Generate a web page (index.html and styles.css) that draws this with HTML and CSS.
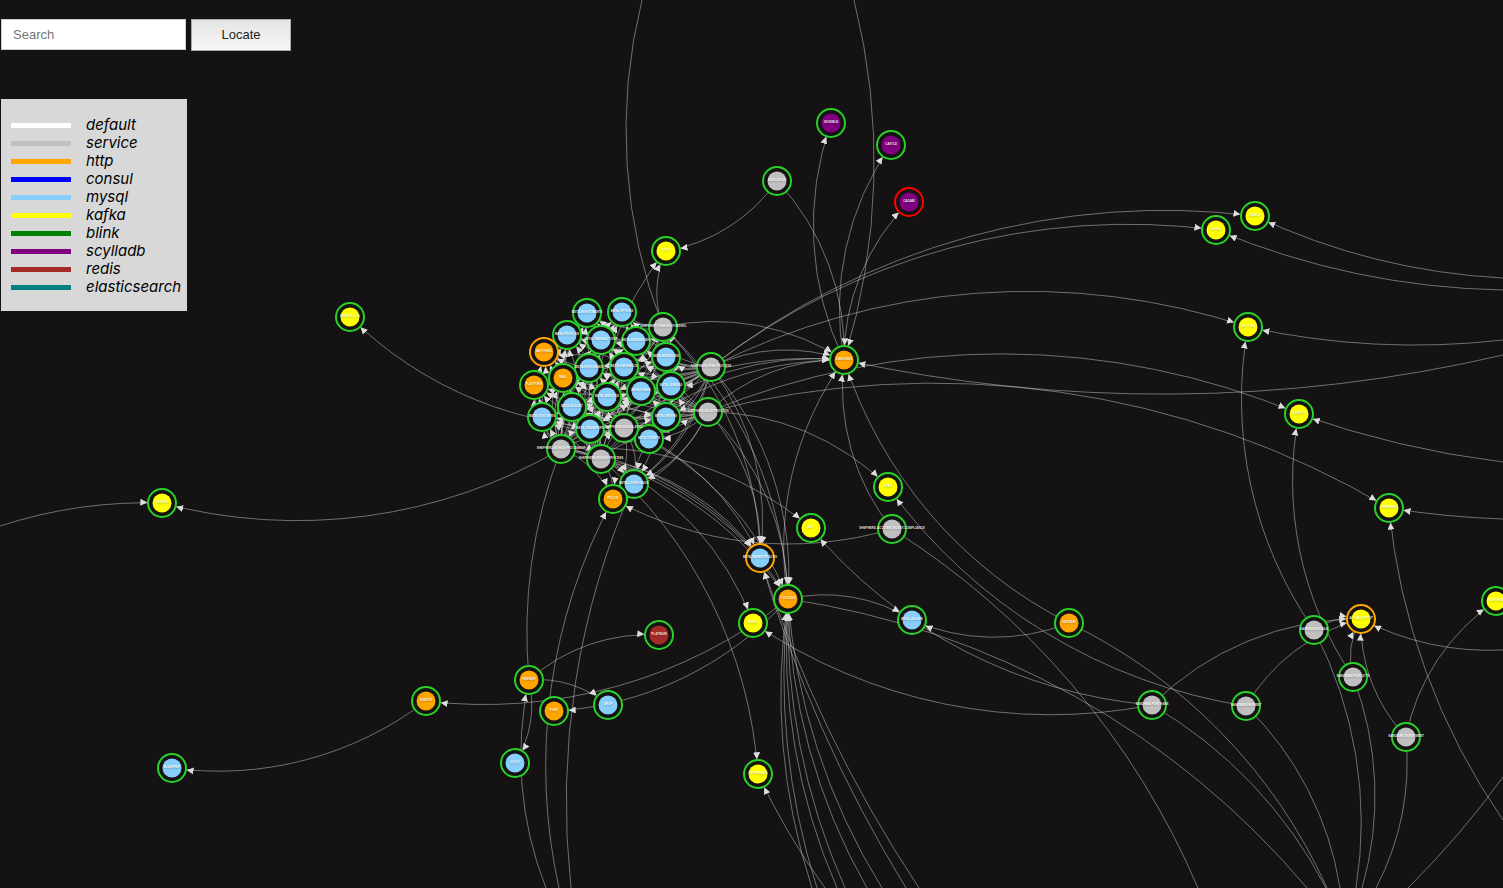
FILE: index.html
```
<!DOCTYPE html>
<html lang="en">
<head>
    <meta charset="utf-8">
    <title>Service Map</title>
    <link rel="stylesheet" href="styles.css">
</head>
<body>
    <svg id="graph">
        <defs>
            <marker id="arrow" viewBox="0 -5 10 10" refX="31" refY="0" markerWidth="7" markerHeight="7" orient="auto">
                <path d="M0,-5L10,0L0,5"></path>
            </marker>
        </defs>
        <g id="links"></g>
        <g id="nodes"></g>
    </svg>

    <div id="panel">
        <form id="search">
            <input type="text" id="query" placeholder="Search" aria-label="Search">
            <button type="button" id="locate">Locate</button>
        </form>
        <ul id="legend">
            <li><span class="swatch default"></span>default</li>
            <li><span class="swatch service"></span>service</li>
            <li><span class="swatch http"></span>http</li>
            <li><span class="swatch consul"></span>consul</li>
            <li><span class="swatch mysql"></span>mysql</li>
            <li><span class="swatch kafka"></span>kafka</li>
            <li><span class="swatch blink"></span>blink</li>
            <li><span class="swatch scylladb"></span>scylladb</li>
            <li><span class="swatch redis"></span>redis</li>
            <li><span class="swatch elasticsearch"></span>elasticsearch</li>
        </ul>
    </div>

    <script src="graph.js"></script>
</body>
</html>
```
FILE: styles.css
```
body {
    margin: 0;
    background-color: #141213;
    font-family: Inter, "Liberation Sans", sans-serif;
}

#graph {
    position: absolute;
    top: 0;
    left: 0;
    width: 100%;
    height: 100%;
    overflow: hidden;
}

#panel {
    position: relative;
    width: max-content;
    padding: 19px 1px;
}

#search {
    display: flex;
    align-items: flex-start;
    gap: 5px;
    height: 32px;
    margin-bottom: 48px;
}

#query {
    box-sizing: border-box;
    width: 185px;
    height: 31px;
    padding: 0 11px;
    border: 1px solid #ccc;
    background-color: #fff;
    font: 13px "Liberation Sans", sans-serif;
}

#query::placeholder {
    color: #757575;
}

#locate {
    width: 100px;
    height: 32px;
    padding-bottom: 2px;
    border: 1px solid #aaa;
    background: linear-gradient(#e4e4e4, #f7f7f7);
    color: #222;
    font: 13px "Liberation Sans", sans-serif;
    cursor: pointer;
}

#legend {
    box-sizing: border-box;
    width: 186px;
    margin: 0;
    padding: 17px 0 15px 10px;
    background-color: #d8d8d8;
    list-style: none;
    font-size: 15px;
    font-style: italic;
    line-height: 18px;
}

#legend li {
    display: flex;
    align-items: center;
    gap: 15px;
}

.swatch {
    width: 60px;
    height: 5px;
}

/* Legend and node colors */
.default { background-color: white; }
.service { background-color: silver; fill: silver; }
.http { background-color: orange; fill: orange; }
.consul { background-color: blue; }
.mysql { background-color: lightskyblue; fill: lightskyblue; }
.kafka { background-color: yellow; fill: yellow; }
.blink { background-color: green; }
.scylladb { background-color: purple; fill: purple; }
.redis { background-color: brown; fill: brown; }
.elasticsearch { background-color: teal; }

.link {
    fill: none;
    stroke: #ccc;
    stroke-opacity: 0.5;
    stroke-width: 1px;
}

#arrow path {
    fill: #ddd;
}

/* Health ring round each node */
.ring {
    fill: #141213;
    stroke: #28d228;
    stroke-width: 2px;
}

.ring.warning {
    stroke: orange;
}

.ring.error {
    stroke: red;
}

.label {
    fill: #fff;
    fill-opacity: 0.9;
    font: bold 3px "Liberation Sans", sans-serif;
    text-anchor: middle;
    text-transform: uppercase;
    text-shadow: 0 1px 2px rgba(0, 0, 0, 0.3);
}
```
FILE: graph.js
```
// id: [x, y, type, label, health]
const nodes = {
    invisible: [831, 123, "scylladb", "invisible"],
    castle: [891, 145, "scylladb", "castle"],
    cadabi: [909, 202, "scylladb", "cadabi", "error"],
    simulator: [777, 181, "service", "simulation"],
    topic: [666, 251, "kafka", "topic"],
    events: [350, 317, "kafka", "events-log"],
    orders: [162, 503, "kafka", "orders"],
    handler: [663, 327, "service", "shepherd-trading-funding"],
    m1: [587, 313, "mysql", "beta-investments"],
    m2: [622, 312, "mysql", "beta-options"],
    m3: [567, 335, "mysql", "beta-profiles"],
    m4: [601, 340, "mysql", "beta-transactions"],
    m5: [636, 341, "mysql", "beta-businesses"],
    h1: [544, 352, "http", "anything", "warning"],
    m6: [666, 357, "mysql", "beta-messages"],
    m7: [589, 368, "mysql", "beta-purchases"],
    m8: [624, 367, "mysql", "beta-insurance"],
    risk: [711, 367, "service", "shepherd-risk-process"],
    h2: [563, 378, "http", "mail"],
    h3: [534, 385, "http", "platform"],
    m9: [671, 386, "mysql", "beta-lending"],
    m10: [641, 391, "mysql", "beta-funds"],
    m11: [607, 397, "mysql", "beta-services"],
    m12: [572, 407, "mysql", "beta-budget"],
    m13: [542, 417, "mysql", "beta-vouchers"],
    m14: [666, 417, "mysql", "beta-orders"],
    m15: [590, 429, "mysql", "beta-transfers"],
    m16: [649, 439, "mysql", "beta-tickets"],
    bulk: [708, 412, "service", "shepherd-bulk-process"],
    bonus: [624, 428, "service", "shepherd-bonus-sync"],
    billing: [561, 449, "service", "shepherd-bonus-processor"],
    books: [601, 459, "service", "shepherd-books-process"],
    m17: [634, 484, "mysql", "beta-compliance"],
    police: [613, 499, "http", "police"],
    diamond: [844, 360, "http", "diamonds"],
    step: [888, 487, "kafka", "step"],
    account: [892, 529, "service", "shepherd-account-money-compliance"],
    unit: [811, 528, "kafka", "unit"],
    market: [760, 558, "mysql", "beta-marketplaces", "warning"],
    toucan: [788, 599, "http", "toucans"],
    music: [753, 623, "kafka", "music"],
    ledger: [912, 620, "mysql", "beta-ledger"],
    gateway: [1069, 623, "http", "gateway"],
    platinum: [659, 635, "redis", "platinum"],
    fantasy: [529, 680, "http", "fantasy"],
    port: [554, 711, "http", "port"],
    drop: [608, 705, "mysql", "drop"],
    dock: [515, 763, "mysql", "dock"],
    agents: [426, 701, "http", "agents"],
    blueprint: [172, 768, "mysql", "blueprint"],
    outreach: [758, 774, "kafka", "outbreaks"],
    nodes: [1216, 230, "kafka", "nodes"],
    email: [1255, 216, "kafka", "emails"],
    factor: [1248, 327, "kafka", "factors"],
    identity: [1299, 414, "kafka", "identity"],
    offering: [1389, 508, "kafka", "offerings"],
    output: [1361, 619, "kafka", "alpha-output", "warning"],
    refund: [1496, 601, "kafka", "refunds"],
    bpm: [1152, 705, "service", "sandman-purchase"],
    ipm: [1246, 706, "service", "sandman-payment"],
    apm: [1314, 630, "service", "sandman-mobile"],
    cpm: [1353, 677, "service", "sandman-products"],
    dpm: [1406, 737, "service", "sandman-investment"]
};

const links = [
    ["diamond", "invisible"], ["diamond", "castle"], ["diamond", "cadabi"],
    ["simulator", "diamond"], ["simulator", "topic"],
    ["handler", "topic"], ["books", "topic"], ["bonus", "events"], ["billing", "orders"],
    ["risk", "nodes"], ["risk", "email"], ["risk", "factor"],
    ["bulk", "identity"], ["bulk", "offering"], ["bulk", "step"],
    ["billing", "unit"], ["books", "music"], ["books", "outreach"],
    ["account", "diamond"], ["account", "police"], ["gateway", "diamond"],
    ["gateway", "ledger"], ["toucan", "ledger"], ["toucan", "diamond"],
    ["toucan", "port"], ["toucan", "agents"], ["agents", "blueprint"],
    ["fantasy", "platinum"], ["fantasy", "drop"], ["fantasy", "dock"],
    ["ipm", "step"], ["bpm", "unit"], ["bpm", "music"],
    ["bpm", "output"], ["ipm", "output"], ["apm", "output"],
    ["cpm", "output"], ["dpm", "output"], ["dpm", "refund"],
    ["apm", "factor"], ["cpm", "identity"]
];

// Every processor talks to all the shared stores
const processors = ["handler", "risk", "bulk", "bonus", "billing", "books"];
const stores = ["m1", "m2", "m3", "m4", "m5", "m6", "m7", "m8", "m9", "m10", "m11", "m12",
    "m13", "m14", "m15", "m16", "m17", "h1", "h2", "h3", "police", "diamond", "market", "toucan"];
processors.forEach(source => {
    stores.forEach(target => links.push([source, target]));
});

// Links that leave the canvas: [x, y on the edge, x, y on the way, node, arrow at the node]
const outer = [
    [642, 0, 626, 130, "handler", false],
    [854, 0, 874, 150, "diamond", true],
    [1503, 278, 1380, 260, "email", true],
    [1503, 290, 1380, 278, "nodes", true],
    [1503, 340, 1410, 345, "factor", true],
    [1503, 355, 1180, 394, "diamond", true],
    [1503, 462, 1393, 442, "identity", true],
    [1503, 519, 1453, 516, "offering", true],
    [1503, 820, 1428, 677, "offering", true],
    [1503, 650, 1447, 647, "output", true],
    [0, 526, 70, 509, "orders", true],
    [1326, 888, 1262, 795, "bpm", false],
    [1327, 888, 1172, 688, "gateway", false],
    [1307, 888, 1130, 730, "toucan", false],
    [1198, 888, 960, 577, "account", false],
    [1340, 888, 1307, 788, "ipm", false],
    [1356, 888, 1361, 808, "apm", false],
    [1362, 888, 1375, 795, "cpm", false],
    [1376, 888, 1405, 795, "dpm", false],
    [825, 888, 795, 843, "outreach", true],
    [812, 888, 782, 728, "toucan", true],
    [817, 888, 786, 728, "toucan", true],
    [837, 888, 792, 728, "toucan", true],
    [845, 888, 797, 728, "toucan", true],
    [867, 888, 804, 728, "toucan", true],
    [882, 888, 811, 728, "toucan", true],
    [906, 888, 822, 728, "market", true],
    [919, 888, 828, 728, "market", true],
    [546, 888, 521, 745, "fantasy", true],
    [559, 888, 549, 705, "police", true],
    [571, 888, 573, 700, "m17", false],
    [529, 680, 528, 600, "billing", false]
];

function add(parent, name, attributes) {
    const element = document.createElementNS("http://www.w3.org/2000/svg", name);
    for (const key in attributes) {
        element.setAttribute(key, attributes[key]);
    }
    document.getElementById(parent).appendChild(element);
    return element;
}

function addLink(x1, y1, r, sweep, x2, y2, arrow) {
    const link = add("links", "path", {
        class: "link",
        d: `M${x1},${y1}A${r},${r} 0 0,${sweep} ${x2},${y2}`
    });
    if (arrow) {
        link.setAttribute("marker-end", "url(#arrow)");
    }
}

links.forEach(([source, target]) => {
    const [x1, y1] = nodes[source];
    const [x2, y2] = nodes[target];
    addLink(x1, y1, Math.hypot(x2 - x1, y2 - y1) * 1.3, 1, x2, y2, true);
});

// Radius of the circle through three points
outer.forEach(([x1, y1, mx, my, id, arrow]) => {
    const [x2, y2] = nodes[id];
    const cross = (mx - x1) * (y2 - y1) - (my - y1) * (x2 - x1);
    const a = Math.hypot(mx - x1, my - y1);
    const b = Math.hypot(x2 - mx, y2 - my);
    const c = Math.hypot(x2 - x1, y2 - y1);
    addLink(x1, y1, a * b * c / (2 * Math.abs(cross)), cross > 0 ? 1 : 0, x2, y2, arrow);
});

// A line from the right edge down to the bottom, no node in view
addLink(1503, 777, 900, 1, 1408, 888, false);

Object.values(nodes).forEach(([x, y, type, label, health]) => {
    add("nodes", "circle", { class: "ring " + (health || ""), cx: x, cy: y, r: 14 });
    add("nodes", "circle", { class: type, cx: x, cy: y, r: 9.5 });
});
Object.values(nodes).forEach(([x, y, type, label]) => {
    add("nodes", "text", { class: "label", x: x, y: y }).textContent = label;
});
```
